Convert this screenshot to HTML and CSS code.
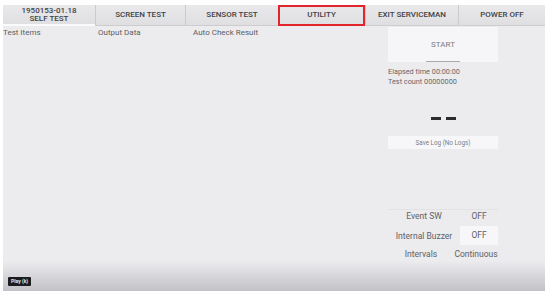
FILE: index.html
```html
<!DOCTYPE html>
<html lang="en">
<head>
    <meta charset="UTF-8">
    <title>Serviceman - Self Test</title>
    <link rel="stylesheet" href="styles.css">
</head>
<body>
    <div class="screen">
        <div class="tabs">
            <div class="tab active">1950153-01.18<br>SELF TEST</div>
            <div class="tab">SCREEN TEST</div>
            <div class="tab">SENSOR TEST</div>
            <div class="tab marked">UTILITY</div>
            <div class="tab">EXIT SERVICEMAN</div>
            <div class="tab">POWER OFF</div>
        </div>

        <div class="main">
            <div class="results">
                <span class="col col-items">Test Items</span>
                <span class="col col-output">Output Data</span>
                <span class="col">Auto Check Result</span>
            </div>

            <div class="side">
                <div class="start-btn">START</div>
                <div class="counters">
                    <div>Elapsed time 00:00:00</div>
                    <div>Test count 00000000</div>
                </div>
                <div class="dashes"><span></span><span></span></div>
                <div class="save-btn">Save Log (No Logs)</div>

                <div class="settings">
                    <div class="setting first">
                        <span class="label">Event SW</span>
                        <span class="value">OFF</span>
                    </div>
                    <div class="setting">
                        <span class="label">Internal Buzzer</span>
                        <span class="value boxed">OFF</span>
                    </div>
                    <div class="setting last">
                        <span class="label">Intervals</span>
                        <span class="value">Continuous</span>
                    </div>
                </div>
            </div>
        </div>

        <div class="player-shade"></div>
        <div class="play-badge">Play (k)</div>
    </div>
</body>
</html>
```

FILE: styles.css
```css
* {
    margin: 0;
    padding: 0;
    box-sizing: border-box;
}

body {
    background-color: #ffffff;
    font-family: Roboto, 'Liberation Sans', sans-serif;
    padding: 5px 5px 5px 3px;
}

.screen {
    position: relative;
    width: 542px;
    height: 286px;
    background-color: #ececef;
    display: flex;
    flex-direction: column;
    overflow: hidden;
}

/* top tab bar */
.tabs {
    display: grid;
    grid-template-columns: 92px 90px 93px 87px 93px 87px;
    height: 21px;
    background: linear-gradient(to bottom, #e9e9ec, #dfdfe2);
    border-bottom: 1px solid #cdcdd1;
}

.tab {
    display: flex;
    align-items: center;
    justify-content: center;
    text-align: center;
    font-size: 8px;
    font-weight: 500;
    line-height: 8.5px;
    color: #424246;
    border-left: 1px solid #cbcbcf;
}

.tab:first-child {
    border-left: none;
}

.tab.active {
    border-bottom: 2px solid #fafafc;
    margin-bottom: -1px;
    padding-top: 1px;
}

.tab.marked {
    border: 2px solid #e0262b;
    margin-bottom: -1px;
}

.main {
    flex: 1;
    display: flex;
}

.results {
    width: 385px;
    display: flex;
    padding-top: 2px;
    font-size: 8px;
    color: #5c5c60;
}

.col-items {
    width: 95px;
}

.col-output {
    width: 95px;
}

/* right control panel */
.side {
    width: 110px;
    display: flex;
    flex-direction: column;
    padding-top: 1px;
}

.start-btn {
    position: relative;
    height: 35px;
    background-color: #f6f6f9;
    display: flex;
    align-items: center;
    justify-content: center;
    font-size: 8px;
    color: #7a7a80;
}

.start-btn::after {
    content: '';
    position: absolute;
    bottom: 0;
    left: 38px;
    width: 34px;
    height: 1px;
    background-color: #a8a8ae;
}

.counters {
    margin-top: 5px;
    font-size: 7.3px;
    line-height: 9.5px;
    color: #66666b;
}

.dashes {
    margin-top: 31px;
    height: 4px;
    display: flex;
    justify-content: center;
    gap: 5px;
}

.dashes span {
    width: 10px;
    height: 3px;
    background-color: #2c2c30;
}

.save-btn {
    margin-top: 15px;
    height: 13px;
    background-color: #f7f7fa;
    display: flex;
    align-items: center;
    justify-content: center;
    font-size: 6.3px;
    color: #7c7c82;
}

.settings {
    margin-top: 60px;
    border-top: 1px solid #e2e2e6;
    display: flex;
    flex-direction: column;
    font-size: 8.5px;
    color: #606066;
}

.setting {
    display: grid;
    grid-template-columns: 72px 38px;
    align-items: center;
    height: 27px;
}

.setting.first {
    height: 12px;
}

.setting .label,
.setting .value {
    text-align: center;
    white-space: nowrap;
}

.setting .value.boxed {
    background-color: #f7f7fa;
    height: 19px;
    line-height: 19px;
}

.setting.last {
    height: 10px;
    grid-template-columns: 66px 44px;
}

/* video player overlay */
.player-shade {
    position: absolute;
    left: 0;
    right: 0;
    bottom: 0;
    height: 30px;
    background: linear-gradient(to bottom, rgba(180, 180, 186, 0), rgba(165, 165, 172, 0.6));
}

.play-badge {
    position: absolute;
    left: 5px;
    bottom: 5px;
    padding: 1px 3px;
    background-color: #1c1c1e;
    color: #e8e8e8;
    font-size: 5px;
    font-weight: 700;
    line-height: 7px;
    border-radius: 1px;
}
```
